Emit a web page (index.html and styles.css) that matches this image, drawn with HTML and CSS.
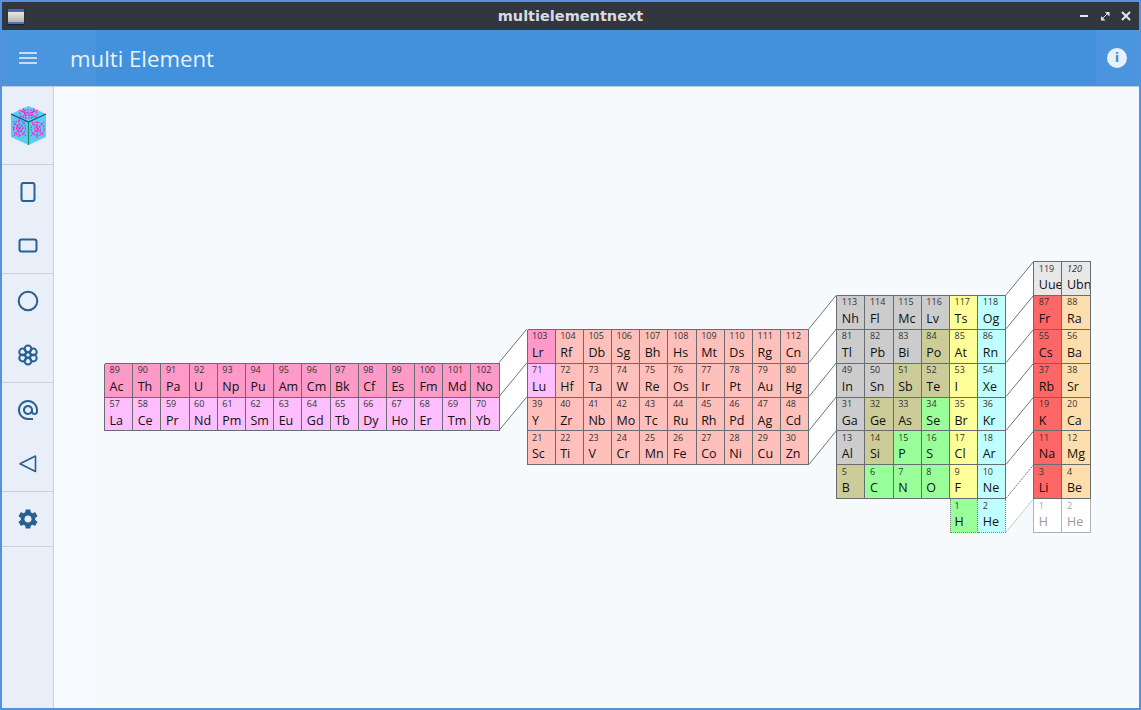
FILE: index.html
```html
<!DOCTYPE html>
<html lang="en">
<head>
    <meta charset="UTF-8">
    <meta name="viewport" content="width=device-width, initial-scale=1.0">
    <title>multielementnext</title>
    <link rel="stylesheet" href="styles.css">
</head>
<body>
    <div class="window">
        <div class="titlebar">
            <div class="win-icon"></div>
            <div class="win-title">multielementnext</div>
            <div class="win-buttons">
                <svg width="10" height="10" viewBox="0 0 10 10"><path d="M1 5h8" stroke="#e4e7ec" stroke-width="2"/></svg>
                <svg width="10" height="10" viewBox="0 0 10 10"><path d="M5 1h4.500v4.500zM1 5v4.500h4.500z" fill="#e4e7ec"/><path d="M2 8l6-6" stroke="#e4e7ec"/></svg>
                <svg width="10" height="10" viewBox="0 0 10 10"><path d="M1 1l8 8M9 1l-8 8" stroke="#e4e7ec" stroke-width="2"/></svg>
            </div>
        </div>

        <div class="appbar">
            <button class="menu-btn">
                <svg width="18" height="14" viewBox="0 0 18 14"><path d="M0 2h18M0 7h18M0 12h18" stroke="#eef4fc" stroke-width="1.700"/></svg>
            </button>
            <div class="app-title">multi Element</div>
            <div class="info-icon">i</div>
        </div>

        <div class="content">
            <div class="sidebar">
                <div class="side-logo">
                    <svg width="36" height="40" viewBox="0 0 36 40">
                        <polygon points="17.500,0 35,8 35,31 17.500,39 0,31 0,8" fill="#5accf5"/>
                        <g fill="none" stroke="#f02cc4" stroke-width="1.100" stroke-dasharray="2 1">
                            <ellipse cx="17.500" cy="8" rx="9" ry="4"/>
                            <ellipse cx="17.500" cy="8" rx="4" ry="1.800"/>
                            <path d="M8 4l19 8M27 4L8 12M12 2l3 11M23 2l-3 11"/>
                            <ellipse cx="8.500" cy="22" rx="6" ry="7.500"/>
                            <ellipse cx="8.500" cy="22" rx="3" ry="4"/>
                            <path d="M2 15l13 15M15 14L3 30M8 12v19M2 22h13"/>
                            <ellipse cx="26.500" cy="23" rx="6.500" ry="6.500"/>
                            <ellipse cx="26.500" cy="23" rx="3" ry="3"/>
                            <path d="M20 30l13-14M21 16l12 14M26 32V15"/>
                        </g>
                        <path d="M0 8l17.500 8L35 8" fill="none" stroke="#175a78" stroke-width="1.200"/>
                        <path d="M17.500 16v23" stroke="#14905c" stroke-width="1.200"/>
                    </svg>
                </div>
                <div class="side-group">
                    <button class="side-btn"><svg width="24" height="24" viewBox="0 0 24 24"><rect x="5.500" y="3" width="13" height="18" rx="2"/></svg></button>
                    <button class="side-btn"><svg width="24" height="24" viewBox="0 0 24 24"><rect x="3.500" y="5.500" width="17" height="12" rx="2"/></svg></button>
                </div>
                <div class="side-group">
                    <button class="side-btn"><svg width="24" height="24" viewBox="0 0 24 24"><circle cx="12" cy="12" r="9.300"/></svg></button>
                    <button class="side-btn">
                        <svg width="24" height="24" viewBox="0 0 24 24">
                            <circle cx="12" cy="12" r="2.800"/>
                            <circle cx="12" cy="5.900" r="3.400"/>
                            <circle cx="12" cy="18.100" r="3.400"/>
                            <circle cx="6.700" cy="9" r="3.400"/>
                            <circle cx="17.300" cy="9" r="3.400"/>
                            <circle cx="6.700" cy="15" r="3.400"/>
                            <circle cx="17.300" cy="15" r="3.400"/>
                        </svg>
                    </button>
                </div>
                <div class="side-group">
                    <button class="side-btn"><svg class="solid" width="24" height="24" viewBox="0 0 24 24"><path d="M12 2C6.480 2 2 6.480 2 12s4.480 10 10 10h5v-2h-5c-4.340 0-8-3.660-8-8s3.660-8 8-8 8 3.660 8 8v1.430c0 .790-.710 1.570-1.500 1.570s-1.500-.780-1.500-1.570V12c0-2.760-2.240-5-5-5s-5 2.240-5 5 2.240 5 5 5c1.380 0 2.640-.560 3.540-1.470.650.890 1.770 1.470 2.960 1.470 1.970 0 3.500-1.600 3.500-3.570V12c0-5.520-4.480-10-10-10zm0 13c-1.660 0-3-1.340-3-3s1.340-3 3-3 3 1.340 3 3-1.340 3-3 3z"/></svg></button>
                    <button class="side-btn"><svg class="thin" width="24" height="24" viewBox="0 0 24 24"><path d="M19.500 4v15.500L4 11.800z" stroke-linejoin="round"/></svg></button>
                </div>
                <div class="side-group">
                    <button class="side-btn"><svg class="solid" width="24" height="24" viewBox="0 0 24 24"><path d="M19.140 12.940c.040-.300.060-.610.060-.940 0-.320-.020-.640-.070-.940l2.030-1.580c.180-.140.230-.410.120-.610l-1.920-3.320c-.120-.220-.370-.290-.590-.220l-2.390.960c-.500-.380-1.030-.700-1.620-.940l-.360-2.540c-.040-.240-.240-.410-.480-.410h-3.840c-.240 0-.430.170-.470.410l-.360 2.540c-.590.240-1.130.570-1.620.940l-2.390-.960c-.220-.080-.470 0-.590.220L2.740 8.870c-.120.210-.080.470.120.610l2.030 1.580c-.050.300-.090.630-.090.940s.020.640.070.940l-2.030 1.580c-.180.140-.230.410-.12.610l1.920 3.320c.120.220.370.290.590.220l2.390-.960c.500.380 1.030.700 1.620.940l.360 2.540c.050.240.240.410.480.410h3.840c.240 0 .440-.170.470-.410l.360-2.540c.590-.240 1.130-.560 1.620-.940l2.390.960c.220.080.470 0 .590-.220l1.920-3.320c.120-.220.070-.470-.120-.61l-2.010-1.580zM12 15.600c-1.980 0-3.600-1.620-3.600-3.600s1.620-3.600 3.600-3.600 3.600 1.620 3.600 3.600-1.620 3.600-3.600 3.600z"/></svg></button>
                </div>
            </div>

            <div class="main">
                <div class="ptable" id="ptable">
                    <!-- Blocks are added by the script below -->
                    <svg class="links" width="987" height="271" viewBox="0 0 987 271">
                        <polygon class="link-fill" points="395,101.700 423,67.800 423,135.600 395,169.500"/>
                        <polygon class="link-fill" points="705,67.800 732.500,33.900 732.500,169.500 705,203.400"/>
                        <polygon class="link-fill" points="902,33.900 930,0 930,237.300 902,271.200"/>
                        <path class="link" d="M395 101.700L423 67.800M395 135.600L423 101.700M395 169.500L423 135.600"/>
                        <path class="link" d="M705 67.800L732.500 33.900M705 101.700L732.500 67.800M705 135.600L732.500 101.700M705 169.500L732.500 135.600M705 203.400L732.500 169.500"/>
                        <path class="link" d="M902 33.900L930 0M902 67.800L930 33.900M902 101.700L930 67.800M902 135.600L930 101.700M902 169.500L930 135.600M902 203.400L930 169.500"/>
                        <path class="link dotted" d="M902 237.300L930 203.400"/>
                        <path class="link dotted faint" d="M902 271.200L930 237.300"/>
                    </svg>
                </div>
            </div>
        </div>
    </div>
    <script>
        // number, symbol, colour class. Rows run top to bottom, as on screen
        var blocks = [
            { name: 'f', cols: 14, rows: [
                ['89 Ac an','90 Th an','91 Pa an','92 U an','93 Np an','94 Pu an','95 Am an','96 Cm an','97 Bk an','98 Cf an','99 Es an','100 Fm an','101 Md an','102 No an'],
                ['57 La la','58 Ce la','59 Pr la','60 Nd la','61 Pm la','62 Sm la','63 Eu la','64 Gd la','65 Tb la','66 Dy la','67 Ho la','68 Er la','69 Tm la','70 Yb la']
            ]},
            { name: 'd', cols: 10, rows: [
                ['103 Lr an','104 Rf tm','105 Db tm','106 Sg tm','107 Bh tm','108 Hs tm','109 Mt tm','110 Ds tm','111 Rg tm','112 Cn tm'],
                ['71 Lu la','72 Hf tm','73 Ta tm','74 W tm','75 Re tm','76 Os tm','77 Ir tm','78 Pt tm','79 Au tm','80 Hg tm'],
                ['39 Y tm','40 Zr tm','41 Nb tm','42 Mo tm','43 Tc tm','44 Ru tm','45 Rh tm','46 Pd tm','47 Ag tm','48 Cd tm'],
                ['21 Sc tm','22 Ti tm','23 V tm','24 Cr tm','25 Mn tm','26 Fe tm','27 Co tm','28 Ni tm','29 Cu tm','30 Zn tm']
            ]},
            { name: 'p', cols: 6, rows: [
                ['113 Nh pm','114 Fl pm','115 Mc pm','116 Lv pm','117 Ts ha','118 Og ng'],
                ['81 Tl pm','82 Pb pm','83 Bi pm','84 Po me','85 At ha','86 Rn ng'],
                ['49 In pm','50 Sn pm','51 Sb me','52 Te me','53 I ha','54 Xe ng'],
                ['31 Ga pm','32 Ge me','33 As me','34 Se nm','35 Br ha','36 Kr ng'],
                ['13 Al pm','14 Si me','15 P nm','16 S nm','17 Cl ha','18 Ar ng'],
                ['5 B me','6 C nm','7 N nm','8 O nm','9 F ha','10 Ne ng'],
                ['- - -','- - -','- - -','- - -','1 H nm dash','2 He ng dash']
            ]},
            { name: 's', cols: 2, rows: [
                ['119 Uue un','120 Ubn un slant'],
                ['87 Fr al','88 Ra ae'],
                ['55 Cs al','56 Ba ae'],
                ['37 Rb al','38 Sr ae'],
                ['19 K al','20 Ca ae'],
                ['11 Na al','12 Mg ae'],
                ['3 Li al','4 Be ae'],
                ['1 H ghost','2 He ghost']
            ]}
        ];

        var ptable = document.getElementById('ptable');

        blocks.forEach(function(block) {
            var grid = document.createElement('div');
            grid.className = 'block block-' + block.name;

            block.rows.forEach(function(row) {
                row.forEach(function(item) {
                    var parts = item.split(' ');
                    var cell = document.createElement('div');

                    if (parts[0] === '-') {
                        cell.className = 'cell-empty';
                        grid.appendChild(cell);
                        return;
                    }

                    cell.className = 'cell ' + parts.slice(2).join(' ');

                    var num = document.createElement('div');
                    num.className = 'num';
                    num.textContent = parts[0];
                    cell.appendChild(num);

                    var sym = document.createElement('div');
                    sym.className = 'sym';
                    sym.textContent = parts[1];
                    cell.appendChild(sym);

                    grid.appendChild(cell);
                });
            });

            ptable.appendChild(grid);
        });
    </script>
</body>
</html>
```

FILE: styles.css
```css
html, body {
    margin: 0;
    height: 100%;
    overflow: hidden;
}

body {
    font-family: "Open Sans", "Noto Sans", sans-serif;
}

.window {
    box-sizing: border-box;
    width: 1141px;
    height: 710px;
    border: 2px solid #5491df;
    display: flex;
    flex-direction: column;
    background-color: #f6fafe;
}

/* Window frame */
.titlebar {
    height: 28px;
    flex: none;
    display: flex;
    align-items: center;
    background-color: #31363f;
}

.win-icon {
    width: 16px;
    height: 15px;
    margin-left: 6px;
    background: linear-gradient(#3d6fb0 0 3px, #e8e8e8 3px, #b4b4b4 13px, #4a78b0 13px);
    box-shadow: 0 1px 1px #1c1f24;
}

.win-title {
    flex: 1;
    text-align: center;
    font-family: "DejaVu Sans", sans-serif;
    font-weight: bold;
    font-size: 14.5px;
    color: #d8dce2;
    padding-left: 38px;
}

.win-buttons {
    display: flex;
    gap: 11px;
    margin-right: 8px;
}

/* App bar */
.appbar {
    height: 57px;
    flex: none;
    display: flex;
    align-items: center;
    box-sizing: border-box;
    border-bottom: 1px solid #b9cbdd;
    background: linear-gradient(90deg, #4a95de 94px, #4291dc 94px, #4291dc 1094px, #4a95de 1094px);
}

.menu-btn {
    width: 52px;
    height: 55px;
    padding: 0;
    border: none;
    background: none;
    display: flex;
    align-items: center;
    justify-content: center;
}

.app-title {
    flex: 1;
    margin-left: 16px;
    font-size: 22.2px;
    color: #e8f1fb;
}

.info-icon {
    width: 20px;
    height: 20px;
    margin-right: 12px;
    border-radius: 50%;
    background-color: #e8f1fb;
    color: #4291dc;
    font-family: "DejaVu Sans", sans-serif;
    font-weight: bold;
    font-size: 13px;
    line-height: 20px;
    text-align: center;
}

.content {
    flex: 1;
    display: flex;
    min-height: 0;
}

/* Sidebar */
.sidebar {
    box-sizing: border-box;
    width: 52px;
    flex: none;
    border-right: 1px solid #c9d1db;
    background-color: #e8eff8;
}

.side-logo {
    height: 77px;
    border-bottom: 1px solid #c9d1db;
    display: flex;
    justify-content: center;
    padding-left: 2px;
}

.side-logo svg {
    margin-top: 19px;
}

.side-group {
    border-bottom: 1px solid #c9d1db;
}

.side-btn {
    display: flex;
    align-items: center;
    justify-content: center;
    width: 51px;
    height: 54px;
    padding: 0;
    border: none;
    background: none;
}

.side-btn svg {
    fill: none;
    stroke: #295f92;
    stroke-width: 2;
}

.side-btn svg.thin {
    stroke-width: 1.6;
}

.side-btn svg.solid {
    fill: #295f92;
    stroke: none;
}

/* Periodic table */
.main {
    flex: 1;
    padding: 175px 0 0 51px;
    background: linear-gradient(90deg, #f7fafe 42px, #f6fafd 42px);
}

.ptable {
    --cell-w: 28.2px;
    --cell-h: 33.9px;
    position: relative;
    width: 987px;
    height: 272px;
    display: flex;
    align-items: flex-start;
    gap: 27.9px;
}

.links {
    position: absolute;
    left: -1px;
    top: -1px;
    overflow: visible;
}

.link-fill {
    fill: #ffffff;
}

.link {
    fill: none;
    stroke: #6f7478;
    stroke-width: 1;
}

.link.dotted {
    stroke-dasharray: 2 1;
}

.link.faint {
    stroke: #b0b4b8;
}

.block {
    position: relative;
    display: grid;
    grid-auto-rows: var(--cell-h);
}

.block-f {
    grid-template-columns: repeat(14, var(--cell-w));
    margin-top: calc(var(--cell-h) * 3);
}

.block-d {
    grid-template-columns: repeat(10, var(--cell-w));
    margin-top: calc(var(--cell-h) * 2);
}

.block-p {
    grid-template-columns: repeat(6, var(--cell-w));
    margin-top: var(--cell-h);
}

.block-s {
    grid-template-columns: repeat(2, var(--cell-w));
}

/* right and bottom are borders, left and top land on the neighbour's border */
.cell {
    --line: #686d71;
    box-sizing: border-box;
    padding-left: 4.5px;
    border-right: 1px solid var(--line);
    border-bottom: 1px solid var(--line);
    box-shadow: -1px 0 0 var(--line), 0 -1px 0 var(--line);
    overflow: hidden;
    color: #111;
    white-space: nowrap;
}

.num {
    font-size: 9px;
    line-height: 12px;
    margin-top: 0.5px;
    color: #333;
}

.sym {
    font-size: 12.5px;
    line-height: 18px;
    margin-top: 1.5px;
}

.an { background-color: #ff99c8; }
.la { background-color: #ffbfff; }
.tm { background-color: #ffbfbb; }
.pm { background-color: #cccccc; }
.me { background-color: #cccc99; }
.nm { background-color: #99ff99; }
.ha { background-color: #ffff99; }
.ng { background-color: #c0ffff; }
.al { background-color: #ff6666; }
.ae { background-color: #ffdead; }
.un { background-color: #e8e8e8; }

.slant .num {
    font-style: italic;
}

.dash {
    border-right: 1px dotted #7c8084;
    border-bottom: 1px dotted #7c8084;
    box-shadow: none;
}

.cell-empty + .dash {
    border-left: 1px dotted #7c8084;
    padding-left: 3.5px;
}

.ghost {
    --line: #b0b0b0;
    background-color: #ffffff;
    color: #9a9a9a;
    box-shadow: -1px 0 0 var(--line);
}

.ghost .num {
    color: #a4a4a4;
}
```
